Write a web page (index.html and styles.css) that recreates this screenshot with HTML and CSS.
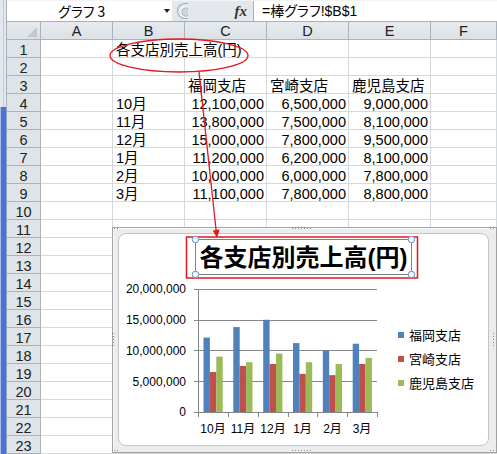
FILE: index.html
```html
<!DOCTYPE html>
<html lang="ja">
<head>
<meta charset="utf-8">
<title>棒グラフ</title>
<link rel="stylesheet" href="styles.css">
</head>
<body>
<div class="app">
  <div class="strip"><div class="strip-top"></div><div class="strip-bot"></div></div>
  <div class="main">
    <div class="edge"></div>
    <div class="fbar">
      <div class="namebox"><span class="nm">グラフ 3</span><span class="dd"></span></div>
      <div class="knob"></div>
      <div class="fx">fx</div>
      <div class="formula">=棒グラフ!$B$1</div>
    </div>
    <div class="gap"></div>
    <div class="sheet">
      <div class="corner"><span class="tri"></span></div><div class="ch">A</div><div class="ch">B</div><div class="ch">C</div><div class="ch">D</div><div class="ch">E</div><div class="ch">F</div>
      <div class="rh">1</div><div class="c"></div><div class="c span2">各支店別売上高(円)</div><div class="c"></div><div class="c"></div><div class="c"></div>
      <div class="rh">2</div><div class="c"></div><div class="c"></div><div class="c"></div><div class="c"></div><div class="c"></div><div class="c"></div>
      <div class="rh">3</div><div class="c"></div><div class="c"></div><div class="c">福岡支店</div><div class="c">宮崎支店</div><div class="c">鹿児島支店</div><div class="c"></div>
      <div class="rh">4</div><div class="c"></div><div class="c">10月</div><div class="c n">12,100,000</div><div class="c n">6,500,000</div><div class="c n">9,000,000</div><div class="c"></div>
      <div class="rh">5</div><div class="c"></div><div class="c">11月</div><div class="c n">13,800,000</div><div class="c n">7,500,000</div><div class="c n">8,100,000</div><div class="c"></div>
      <div class="rh">6</div><div class="c"></div><div class="c">12月</div><div class="c n">15,000,000</div><div class="c n">7,800,000</div><div class="c n">9,500,000</div><div class="c"></div>
      <div class="rh">7</div><div class="c"></div><div class="c">1月</div><div class="c n">11,200,000</div><div class="c n">6,200,000</div><div class="c n">8,100,000</div><div class="c"></div>
      <div class="rh">8</div><div class="c"></div><div class="c">2月</div><div class="c n">10,000,000</div><div class="c n">6,000,000</div><div class="c n">7,800,000</div><div class="c"></div>
      <div class="rh">9</div><div class="c"></div><div class="c">3月</div><div class="c n">11,100,000</div><div class="c n">7,800,000</div><div class="c n">8,800,000</div><div class="c"></div>
      <div class="rh">10</div><div class="c"></div><div class="c"></div><div class="c"></div><div class="c"></div><div class="c"></div><div class="c"></div>
      <div class="rh">11</div><div class="c"></div><div class="c"></div><div class="c"></div><div class="c"></div><div class="c"></div><div class="c"></div>
      <div class="rh">12</div><div class="c"></div><div class="c"></div><div class="c"></div><div class="c"></div><div class="c"></div><div class="c"></div>
      <div class="rh">13</div><div class="c"></div><div class="c"></div><div class="c"></div><div class="c"></div><div class="c"></div><div class="c"></div>
      <div class="rh">14</div><div class="c"></div><div class="c"></div><div class="c"></div><div class="c"></div><div class="c"></div><div class="c"></div>
      <div class="rh">15</div><div class="c"></div><div class="c"></div><div class="c"></div><div class="c"></div><div class="c"></div><div class="c"></div>
      <div class="rh">16</div><div class="c"></div><div class="c"></div><div class="c"></div><div class="c"></div><div class="c"></div><div class="c"></div>
      <div class="rh">17</div><div class="c"></div><div class="c"></div><div class="c"></div><div class="c"></div><div class="c"></div><div class="c"></div>
      <div class="rh">18</div><div class="c"></div><div class="c"></div><div class="c"></div><div class="c"></div><div class="c"></div><div class="c"></div>
      <div class="rh">19</div><div class="c"></div><div class="c"></div><div class="c"></div><div class="c"></div><div class="c"></div><div class="c"></div>
      <div class="rh">20</div><div class="c"></div><div class="c"></div><div class="c"></div><div class="c"></div><div class="c"></div><div class="c"></div>
      <div class="rh">21</div><div class="c"></div><div class="c"></div><div class="c"></div><div class="c"></div><div class="c"></div><div class="c"></div>
      <div class="rh">22</div><div class="c"></div><div class="c"></div><div class="c"></div><div class="c"></div><div class="c"></div><div class="c"></div>
      <div class="rh">23</div><div class="c"></div><div class="c"></div><div class="c"></div><div class="c"></div><div class="c"></div><div class="c"></div>
    </div>
  </div>

  <div class="chart">
    <span class="grip g-tl"></span><span class="grip g-tm"></span><span class="grip g-tr"></span>
    <span class="grip g-ml"></span><span class="grip g-mr"></span>
    <span class="grip g-bl"></span><span class="grip g-bm"></span><span class="grip g-br"></span>
    <div class="chart-inner">
      <svg class="plot" width="369" height="211" viewBox="119 234 369 211">
        <rect x="186.5" y="237" width="231" height="41" fill="none" stroke="#e3171f" stroke-width="1.5"/>
        <rect x="195.5" y="239.5" width="216" height="35" fill="none" stroke="#808080" stroke-width="1"/>
        <text class="ttl" x="303.5" y="266" text-anchor="middle">各支店別売上高(円)</text>
        <g fill="#eef3fa" stroke="#6f94c8" stroke-width="1">
          <circle cx="195.5" cy="239.5" r="3.3"/><circle cx="411.5" cy="239.5" r="3.3"/>
          <circle cx="195.5" cy="274.5" r="3.3"/><circle cx="411.5" cy="274.5" r="3.3"/>
        </g>
        <g stroke="#868686" stroke-width="1">
          <line x1="198" y1="289.5" x2="377" y2="289.5"/>
          <line x1="198" y1="320.5" x2="377" y2="320.5"/>
          <line x1="198" y1="350.5" x2="377" y2="350.5"/>
          <line x1="198" y1="381.5" x2="377" y2="381.5"/>
          <line x1="194" y1="289.5" x2="198" y2="289.5"/>
          <line x1="194" y1="320.5" x2="198" y2="320.5"/>
          <line x1="194" y1="350.5" x2="198" y2="350.5"/>
          <line x1="194" y1="381.5" x2="198" y2="381.5"/>
        </g>
        <g fill="#4f81bd">
          <rect x="203.5" y="337.6" width="6.4" height="74.4"/>
          <rect x="233.3" y="327.1" width="6.4" height="84.9"/>
          <rect x="263.2" y="319.8" width="6.4" height="92.2"/>
          <rect x="293" y="343.1" width="6.4" height="68.9"/>
          <rect x="322.8" y="350.5" width="6.4" height="61.5"/>
          <rect x="352.7" y="343.7" width="6.4" height="68.3"/>
        </g>
        <g fill="#c0504d">
          <rect x="209.9" y="372" width="6.4" height="40"/>
          <rect x="239.7" y="365.9" width="6.4" height="46.1"/>
          <rect x="269.6" y="364" width="6.4" height="48"/>
          <rect x="299.4" y="373.9" width="6.4" height="38.1"/>
          <rect x="329.2" y="375.1" width="6.4" height="36.9"/>
          <rect x="359.1" y="364" width="6.4" height="48"/>
        </g>
        <g fill="#9bbb59">
          <rect x="216.3" y="356.6" width="6.4" height="55.4"/>
          <rect x="246.1" y="362.2" width="6.4" height="49.8"/>
          <rect x="276" y="353.6" width="6.4" height="58.4"/>
          <rect x="305.8" y="362.2" width="6.4" height="49.8"/>
          <rect x="335.6" y="364" width="6.4" height="48"/>
          <rect x="365.5" y="357.9" width="6.4" height="54.1"/>
        </g>
        <g stroke="#868686" stroke-width="1">
          <line x1="198.5" y1="289" x2="198.5" y2="417"/>
          <line x1="194" y1="412.5" x2="377.5" y2="412.5"/>
          <line x1="228.5" y1="412" x2="228.5" y2="417"/>
          <line x1="258.5" y1="412" x2="258.5" y2="417"/>
          <line x1="288.5" y1="412" x2="288.5" y2="417"/>
          <line x1="317.5" y1="412" x2="317.5" y2="417"/>
          <line x1="347.5" y1="412" x2="347.5" y2="417"/>
          <line x1="377.5" y1="412" x2="377.5" y2="417"/>
        </g>
        <g class="ax" text-anchor="end">
          <text x="186" y="293">20,000,000</text>
          <text x="186" y="324">15,000,000</text>
          <text x="186" y="354.5">10,000,000</text>
          <text x="186" y="385.5">5,000,000</text>
          <text x="186" y="416">0</text>
        </g>
        <g class="ax" text-anchor="middle">
          <text x="213" y="433">10月</text>
          <text x="243" y="433">11月</text>
          <text x="273" y="433">12月</text>
          <text x="302.5" y="433">1月</text>
          <text x="332.5" y="433">2月</text>
          <text x="362" y="433">3月</text>
        </g>
        <rect x="398" y="332" width="6" height="6" fill="#4f81bd"/>
        <rect x="398" y="356" width="6" height="6" fill="#c0504d"/>
        <rect x="398" y="380" width="6" height="6" fill="#9bbb59"/>
        <g class="lg">
          <text x="409" y="340">福岡支店</text>
          <text x="409" y="364">宮崎支店</text>
          <text x="409" y="388">鹿児島支店</text>
        </g>
      </svg>
    </div>
  </div>

  <svg class="annot" width="497" height="454" viewBox="0 0 497 454">
    <ellipse cx="179" cy="55.5" rx="69" ry="16.5" fill="none" stroke="#e3171f" stroke-width="1.3"/>
    <line x1="199" y1="72" x2="216.2" y2="231" stroke="#e3171f" stroke-width="1.3"/>
    <polygon points="217,238 219.6,229.6 212.8,230.4" fill="#e3171f"/>
  </svg>
</div>
</body>
</html>
```

FILE: styles.css
```css
body {
  margin: 0;
}

.app {
  position: relative;
  width: 497px;
  height: 454px;
  overflow: hidden;
  display: flex;
  background: #fff;
  font-family: "Liberation Sans", "Noto Sans CJK JP", sans-serif;
  color: #000;
}

/* left window edge */
.strip {
  width: 7px;
  flex: none;
  display: flex;
  flex-direction: column;
}
.strip-top {
  height: 107px;
  background: linear-gradient(to right, #e3e8ef 0 3px, #c3cbd6 3px 4px, #e3e8ef 4px 6px, #a6afbc 6px 7px);
}
.strip-bot {
  flex: 1;
  background: linear-gradient(to right, #a9bde9 0 1px, #4a74d4 1px 6px, #98a4b6 6px 7px);
}

.main {
  flex: 1;
  display: flex;
  flex-direction: column;
  min-width: 0;
}

.edge {
  height: 5px;
  background: linear-gradient(#f1f3f6 0 2px, #a4d58b 2px 3.5px, #f7f8fa 3.5px 5px);
}

/* formula bar */
.fbar {
  height: 20px;
  display: flex;
  background: #e3e8ed;
  border-bottom: 1px solid #a7afba;
}
.namebox {
  width: 165px;
  flex: none;
  background: #fff;
  display: flex;
  align-items: center;
}
.nm {
  flex: 1;
  padding-left: 51px;
  font-family: "Noto Sans CJK JP", sans-serif;
  font-feature-settings: "palt";
  font-size: 14px;
  line-height: 20px;
}
.dd {
  width: 0;
  height: 0;
  margin-right: 2px;
  border-left: 3.5px solid transparent;
  border-right: 3.5px solid transparent;
  border-top: 4px solid #222;
}
.knob {
  width: 11px;
  height: 16px;
  margin: 2px 0 0 5px;
  box-sizing: border-box;
  border: 1px solid #a3abb6;
  border-right: none;
  border-radius: 8px 0 0 8px;
  background: radial-gradient(circle at 8px 8px, #cfd5dc 0 3.5px, #9aa3ae 4px, #f4f6f8 5px, #dfe4ea 8px);
}
.fx {
  width: 65px;
  flex: none;
  box-sizing: border-box;
  padding-right: 6px;
  text-align: right;
  font-family: "Liberation Serif", serif;
  font-style: italic;
  font-weight: bold;
  font-size: 15px;
  line-height: 20px;
  color: #333;
}
.formula {
  flex: 1;
  background: #fff;
  border-left: 1px solid #a7afba;
  padding-left: 8px;
  font-family: "Liberation Sans", "Noto Sans CJK JP", sans-serif;
  font-feature-settings: "palt";
  font-size: 14px;
  line-height: 20px;
  white-space: nowrap;
}

.gap {
  height: 2px;
  background: #e7ebef;
}

/* sheet grid */
.sheet {
  display: grid;
  grid-template-columns: 34px 72px 72px 82px 82px 82px 1fr;
  grid-auto-rows: 18px;
  font-size: 14.5px;
}
.sheet > div {
  box-sizing: border-box;
  white-space: nowrap;
  line-height: 20px;
}
.corner {
  background: linear-gradient(#e6eaee, #dce1e6);
  border-right: 1px solid #aab2bc;
  border-bottom: 1px solid #aab2bc;
  display: flex;
  justify-content: flex-end;
  align-items: flex-end;
  padding: 0 3px 2px 0;
}
.tri {
  width: 0;
  height: 0;
  border-left: 10px solid transparent;
  border-bottom: 10px solid #c2c8cf;
}
.ch {
  background: linear-gradient(#e7ebef, #dce1e6);
  border-right: 1px solid #aab2bc;
  border-bottom: 1px solid #aab2bc;
  text-align: center;
  color: #222;
  line-height: 18px !important;
}
.rh {
  background: #dfe4e8;
  border-right: 1px solid #aab2bc;
  border-bottom: 1px solid #aab2bc;
  text-align: center;
  color: #222;
}
.c {
  border-right: 1px solid #d3d9df;
  border-bottom: 1px solid #d3d9df;
  padding-left: 3px;
}
.span2 {
  grid-column: span 2;
}
.n {
  text-align: right;
  padding: 0 2px 0 0;
}

/* chart object */
.chart {
  position: absolute;
  left: 112px;
  top: 227px;
  width: 385px;
  height: 226px;
  box-sizing: border-box;
  border: 1px solid #a2a2a2;
  background: #ececec;
  box-shadow: inset 1px 1px 0 #fbfbfb;
}
.chart-inner {
  position: absolute;
  left: 5px;
  top: 5px;
  right: 7px;
  bottom: 6px;
  box-sizing: border-box;
  background: #fff;
  border: 1px solid #c4c4c4;
  border-radius: 8px;
  overflow: hidden;
}
.plot {
  display: block;
}
.ttl {
  font-family: "Liberation Sans", "Noto Sans CJK JP", sans-serif;
  font-weight: bold;
  font-size: 24px;
  fill: #000;
}
.ax {
  font-family: "Liberation Sans", "Noto Sans CJK JP", sans-serif;
  font-size: 12px;
  fill: #000;
}
.lg {
  font-family: "Noto Sans CJK JP", sans-serif;
  font-size: 13px;
  fill: #000;
}

.grip {
  position: absolute;
  background: radial-gradient(circle, #8c8c8c 0 0.7px, transparent 0.9px) 0 0 / 3px 3px;
}
.g-tl { left: 0; top: -1px; width: 6px; height: 3px; }
.g-tm { left: 178px; top: -1px; width: 21px; height: 3px; }
.g-tr { right: 1px; top: -1px; width: 6px; height: 3px; }
.g-ml { left: -1px; top: 104px; width: 3px; height: 15px; }
.g-mr { right: 1px; top: 104px; width: 3px; height: 15px; }
.g-bl { left: 0; bottom: 0; width: 6px; height: 3px; }
.g-bm { left: 178px; bottom: 0; width: 21px; height: 3px; }
.g-br { right: 1px; bottom: 0; width: 6px; height: 3px; }

.annot {
  position: absolute;
  left: 0;
  top: 0;
  pointer-events: none;
}
```
